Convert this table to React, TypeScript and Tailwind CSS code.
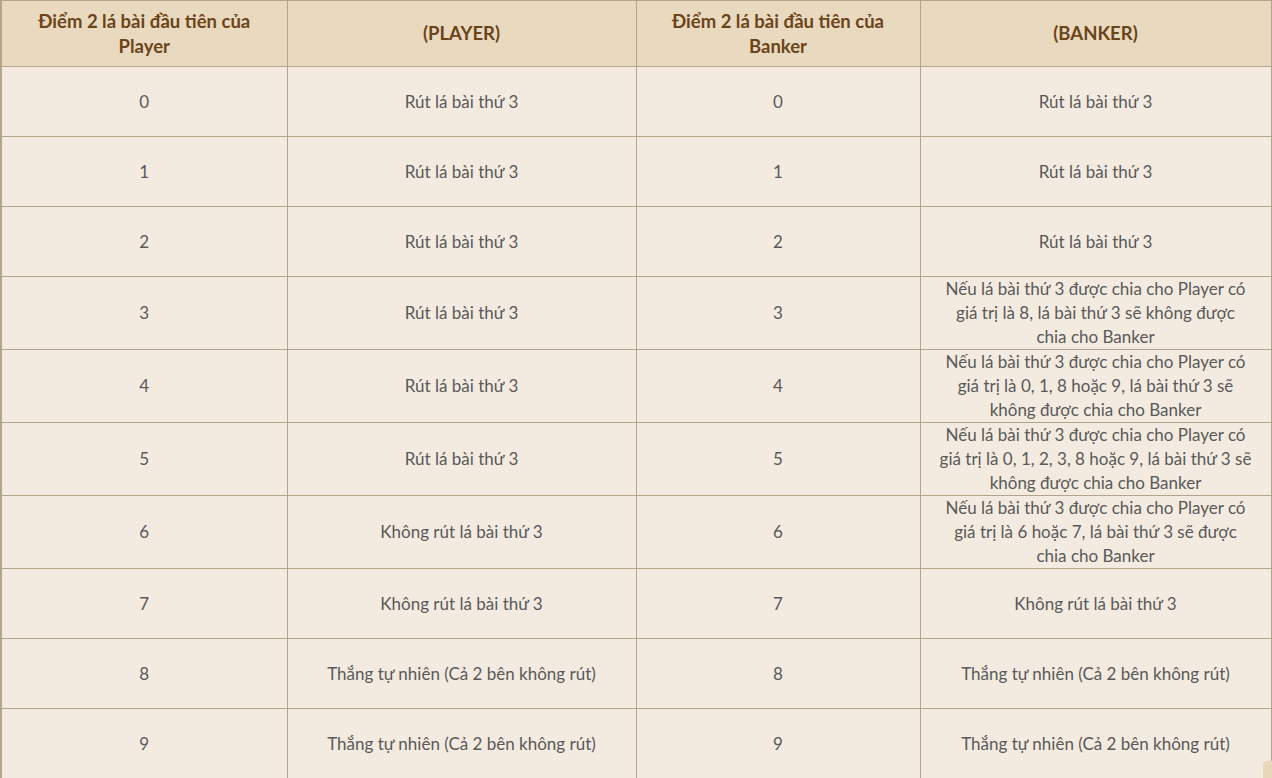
const rows: [string, string, string, string][] = [
	["0", "Rút lá bài thứ 3", "0", "Rút lá bài thứ 3"],
	["1", "Rút lá bài thứ 3", "1", "Rút lá bài thứ 3"],
	["2", "Rút lá bài thứ 3", "2", "Rút lá bài thứ 3"],
	[
		"3",
		"Rút lá bài thứ 3",
		"3",
		"Nếu lá bài thứ 3 được chia cho Player có\ngiá trị là 8, lá bài thứ 3 sẽ không được\nchia cho Banker",
	],
	[
		"4",
		"Rút lá bài thứ 3",
		"4",
		"Nếu lá bài thứ 3 được chia cho Player có\ngiá trị là 0, 1, 8 hoặc 9, lá bài thứ 3 sẽ\nkhông được chia cho Banker",
	],
	[
		"5",
		"Rút lá bài thứ 3",
		"5",
		"Nếu lá bài thứ 3 được chia cho Player có\ngiá trị là 0, 1, 2, 3, 8 hoặc 9, lá bài thứ 3 sẽ\nkhông được chia cho Banker",
	],
	[
		"6",
		"Không rút lá bài thứ 3",
		"6",
		"Nếu lá bài thứ 3 được chia cho Player có\ngiá trị là 6 hoặc 7, lá bài thứ 3 sẽ được\nchia cho Banker",
	],
	["7", "Không rút lá bài thứ 3", "7", "Không rút lá bài thứ 3"],
	[
		"8",
		"Thắng tự nhiên (Cả 2 bên không rút)",
		"8",
		"Thắng tự nhiên (Cả 2 bên không rút)",
	],
	[
		"9",
		"Thắng tự nhiên (Cả 2 bên không rút)",
		"9",
		"Thắng tự nhiên (Cả 2 bên không rút)",
	],
]

const headers = [
	"Điểm 2 lá bài đầu tiên của Player",
	"(PLAYER)",
	"Điểm 2 lá bài đầu tiên của Banker",
	"(BANKER)",
]

const widths = ["w-[286px]", "w-[349px]", "w-[284px]", "w-[351px]"]

export default function App() {
	return (
		<div className="relative min-h-[778px] bg-white font-['Lato','Noto_Sans',sans-serif]">
			<table className="w-[1270px] table-fixed border-collapse border-l-2 border-[#b3a48b]">
				<colgroup>
					{widths.map((w, i) => (
						<col key={i} className={w} />
					))}
				</colgroup>
				<thead>
					<tr className="bg-[#e9d9bf]">
						{headers.map((h, i) => (
							<th
								key={i}
								className="h-[66px] border border-[#b3a48b] px-5 py-0 text-center text-[18.5px] font-bold leading-[25px] text-[#6b4519]"
							>
								{h}
							</th>
						))}
					</tr>
				</thead>
				<tbody>
					{rows.map((r, ri) => (
						<tr key={ri} className="bg-[#f3ebe0]">
							{r.map((c, ci) => (
								<td
									key={ci}
									className="h-[70px] whitespace-pre-line border border-[#b3a48b] px-3 py-0 text-center text-[17px] leading-6 text-[#595959]"
								>
									{c}
								</td>
							))}
						</tr>
					))}
				</tbody>
			</table>
			<div className="absolute bottom-0 right-0 h-[18px] w-[9px] rounded-tl-[3px] bg-[#ead8bb]" />
		</div>
	)
}
